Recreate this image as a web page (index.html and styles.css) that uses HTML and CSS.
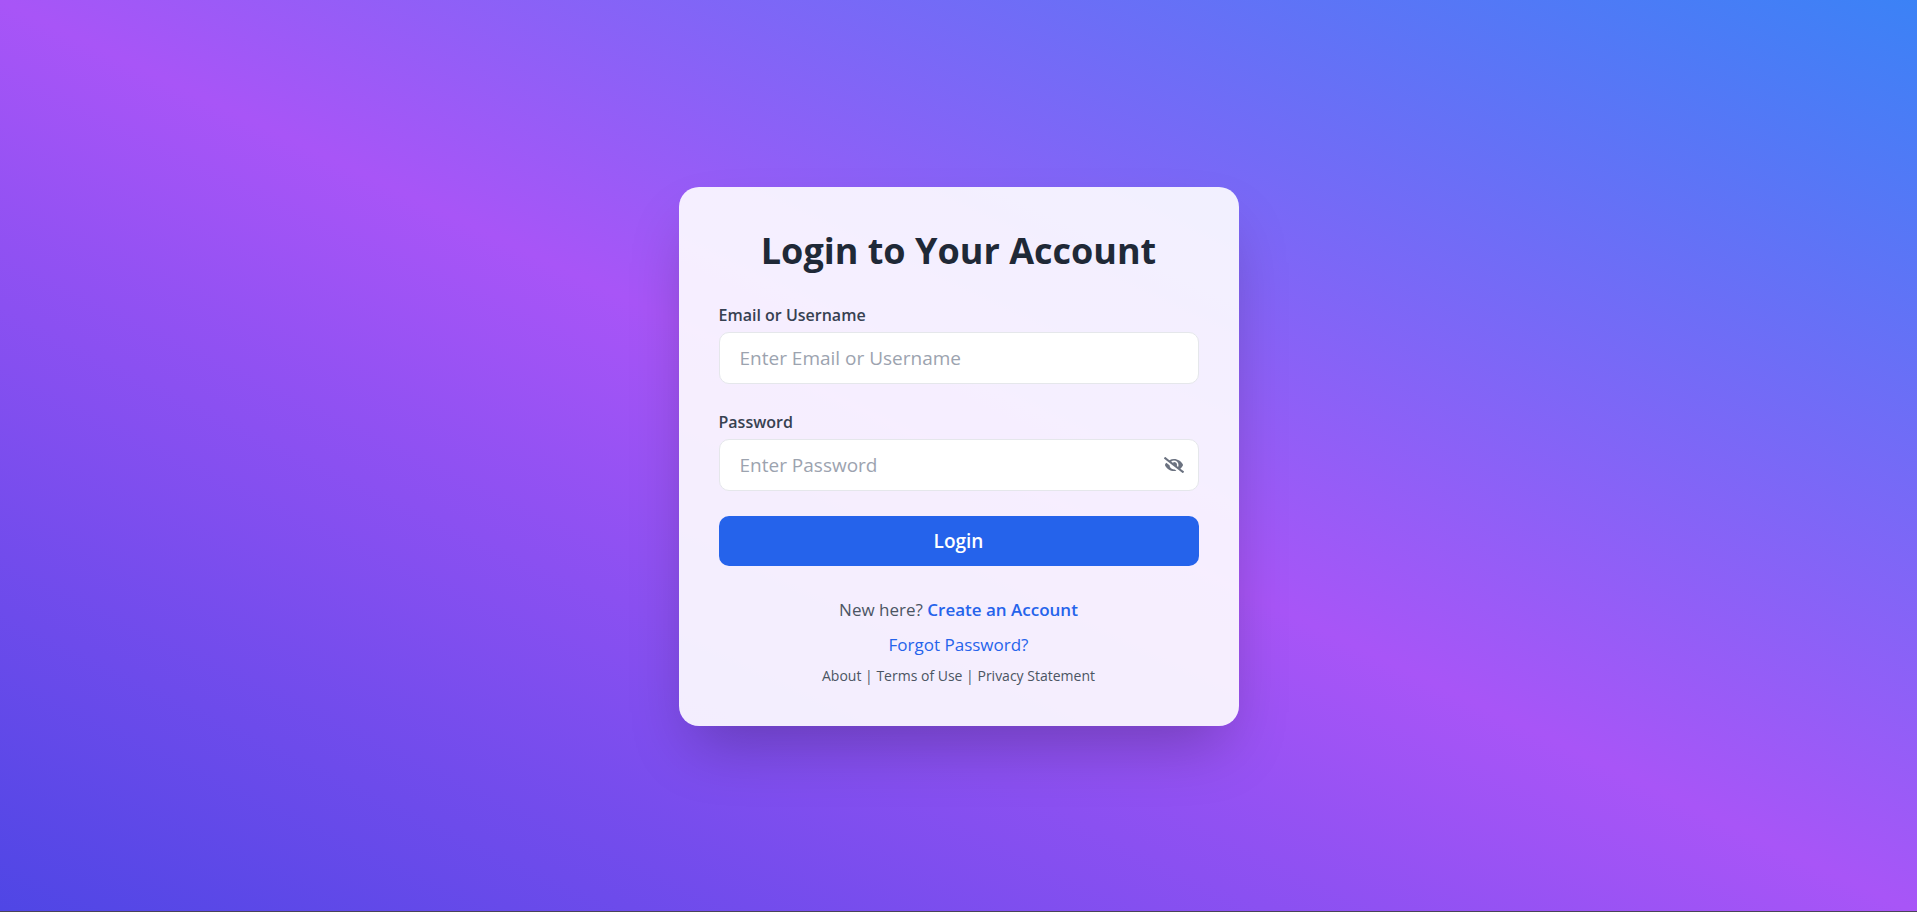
FILE: index.html
```html
<!DOCTYPE html>
<html lang="en">
<head>
<meta charset="utf-8">
<meta name="viewport" content="width=device-width, initial-scale=1">
<title>Login</title>
<link rel="stylesheet" href="styles.css">
</head>
<body>
<main class="page">
  <section class="card">
    <h1 class="title">Login to Your Account</h1>
    <form class="form">
      <div class="field">
        <label class="label" for="user">Email or Username</label>
        <input class="input" id="user" type="text" placeholder="Enter Email or Username">
      </div>
      <div class="field">
        <label class="label" for="password">Password</label>
        <div class="password">
          <input class="input" id="password" type="password" placeholder="Enter Password">
          <button class="toggle" type="button" aria-label="Show password">
            <svg class="icon" viewBox="0 0 640 512" aria-hidden="true"><path fill="currentColor" d="M320 400c-75.85 0-137.25-58.71-142.9-133.11L72.2 185.82c-13.79 17.3-26.48 35.59-36.72 55.59a32.35 32.35 0 0 0 0 29.19C89.71 376.41 197.07 448 320 448c26.91 0 52.87-4 77.89-10.46L346 397.39a144.13 144.13 0 0 1-26 2.61zm313.82 58.1l-110.55-85.44a331.25 331.25 0 0 0 81.25-102.07 32.35 32.35 0 0 0 0-29.19C550.29 135.59 442.93 64 320 64a308.15 308.15 0 0 0-147.32 37.7L45.46 3.37A16 16 0 0 0 23 6.18L3.37 31.45A16 16 0 0 0 6.18 53.9l588.36 454.73a16 16 0 0 0 22.46-2.81l19.64-25.27a16 16 0 0 0-2.82-22.45zm-183.72-142l-39.3-30.38A94.75 94.75 0 0 0 416 256a94.76 94.76 0 0 0-121.31-92.21A47.65 47.65 0 0 1 304 192a46.64 46.64 0 0 1-1.54 10l-73.61-56.89A142.31 142.31 0 0 1 320 112a143.92 143.92 0 0 1 144 144c0 21.63-5.29 41.79-13.9 60.11z"/></svg>
          </button>
        </div>
      </div>
      <button class="submit" type="submit">Login</button>
    </form>
    <div class="links">
      <p class="line">New here? <a class="link strong" href="#">Create an Account</a></p>
      <p class="line"><a class="link" href="#">Forgot Password?</a></p>
      <p class="legal"><a href="#">About</a> | <a href="#">Terms of Use</a> | <a href="#">Privacy Statement</a></p>
    </div>
  </section>
</main>
</body>
</html>
```
FILE: styles.css
```css
* {
  box-sizing: border-box;
}

body {
  margin: 0;
  font-family: "Segoe UI", "Open Sans", "Noto Sans", sans-serif;
  color: #4b5563;
}

h1,
p {
  margin: 0;
}

a {
  color: inherit;
  text-decoration: none;
}

.page {
  display: flex;
  align-items: center;
  justify-content: center;
  min-height: 100vh;
  padding: 18px 16px 16px;
  border-bottom: 1px solid #4a4458;
  background: linear-gradient(to top right, #4f46e5, #a855f7, #3b82f6) border-box;
}

.card {
  width: 100%;
  max-width: 560px;
  padding: 40px;
  border-radius: 20px;
  background: rgba(255, 255, 255, 0.9);
  box-shadow: 0 31px 62px -15px rgba(0, 0, 0, 0.25);
}

.title {
  margin-bottom: 27px;
  font-size: 36px;
  font-weight: 700;
  line-height: 48px;
  text-align: center;
  color: #1f2937;
}

.form {
  display: flex;
  flex-direction: column;
  gap: 25px;
}

.field {
  display: flex;
  flex-direction: column;
  gap: 4px;
}

.label {
  font-size: 16px;
  font-weight: 600;
  line-height: 26px;
  color: #374151;
}

.input {
  display: block;
  width: 100%;
  height: 52px;
  padding: 0 20px;
  border: 1px solid #e5e7eb;
  border-radius: 10px;
  background: #fff;
  font: inherit;
  font-size: 19px;
  color: #1f2937;
}

.input::placeholder {
  color: #9ca3af;
}

.password {
  position: relative;
}

.toggle {
  position: absolute;
  top: 0;
  bottom: 0;
  right: 15px;
  display: flex;
  align-items: center;
  padding: 0;
  border: 0;
  background: none;
  color: #6b7280;
}

.icon {
  width: 20px;
  height: 20px;
}

.submit {
  height: 50px;
  border: 0;
  border-radius: 10px;
  background: #2563eb;
  font: inherit;
  font-size: 19px;
  font-weight: 600;
  color: #fff;
}

.links {
  display: flex;
  flex-direction: column;
  gap: 8px;
  margin-top: 30px;
  text-align: center;
}

.line {
  font-size: 17px;
  line-height: 27px;
}

.link {
  color: #2563eb;
}

.strong {
  font-weight: 600;
}

.legal {
  font-size: 14px;
  line-height: 20px;
}
```
